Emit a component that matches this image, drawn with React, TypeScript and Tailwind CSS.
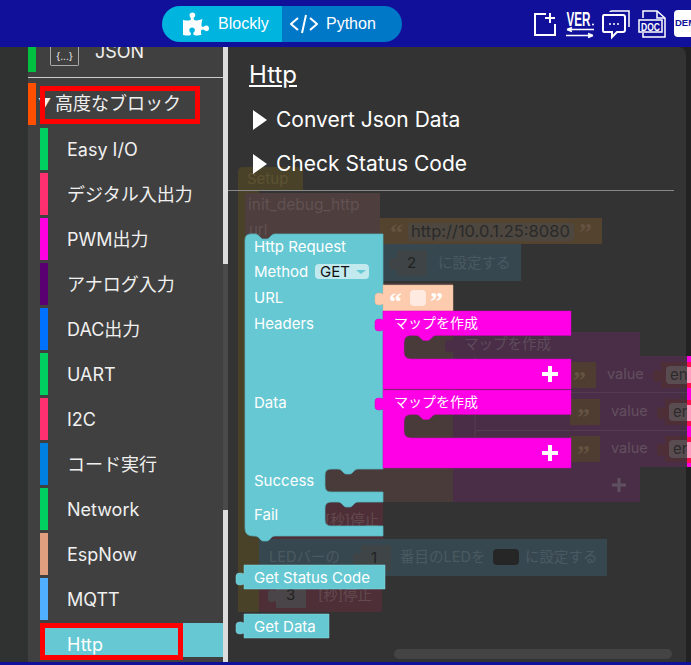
import React from 'react';
import { FaPuzzlePiece } from 'react-icons/fa';

const FONT = 'Inter, "Noto Sans CJK JP", sans-serif';
const QUOTE = '"Liberation Serif", serif';

interface Category {
    label: string;
    color: string;
}

const categories: Category[] = [
    { label: 'Easy I/O', color: 'bg-[#00d060]' },
    { label: 'デジタル入出力', color: 'bg-[#ff3070]' },
    { label: 'PWM出力', color: 'bg-[#ff00e0]' },
    { label: 'アナログ入力', color: 'bg-[#5a0070]' },
    { label: 'DAC出力', color: 'bg-[#0070ff]' },
    { label: 'UART', color: 'bg-[#00d060]' },
    { label: 'I2C', color: 'bg-[#ff3070]' },
    { label: 'コード実行', color: 'bg-[#0080e0]' },
    { label: 'Network', color: 'bg-[#00d060]' },
    { label: 'EspNow', color: 'bg-[#e0a080]' },
    { label: 'MQTT', color: 'bg-[#50b0ff]' },
];

// puzzle notch drawn left to right, and right to left
const NOTCH_R = 'c 2,0 3,1 4,2 l 2,2 c 1,1 2,1 3,1 h 2 c 1,0 2,0 3,-1 l 2,-2 c 1,-1 2,-2 4,-2';
const NOTCH_L = 'c -2,0 -3,1 -4,2 l -2,2 c -1,1 -2,1 -3,1 h -2 c -1,0 -2,0 -3,-1 l -2,-2 c -1,-1 -2,-2 -4,-2';
const TAB = 'q -2,1 -4,1 q -4,0 -4,-3 v -6 q 0,-3 4,-3 q 2,0 4,1';

const outputPath = (x: number, y: number, w: number, h: number) =>
    `M ${x},${y} H ${x + w} V ${y + h} H ${x} V ${y + 19} ${TAB} Z`;

const mainBlock = [
    'M 245,240 q 0,-6 6,-6 h 4',
    NOTCH_R,
    'H 383 V 469 H 358',
    NOTCH_L,
    'H 331 q -6,0 -6,6 V 486 q 0,6 6,6 H 383 V 502 H 358',
    NOTCH_L,
    'H 331 q -6,0 -6,6 V 520 q 0,6 6,6 H 383 V 536 H 275',
    NOTCH_L,
    'H 253 q -8,0 -8,-8 Z',
].join(' ');

const mapBlock = (y: number) =>
    [
        `M 383,${y} H 571 V ${y + 24.5} H 436`,
        NOTCH_L,
        `H 411 q -7,0 -7,7 V ${y + 41} q 0,7 7,7 H 571 V ${y + 78} H 383 V ${y + 19}`,
        TAB,
        'Z',
    ].join(' ');

const DimCanvas: React.FC = () => (
    <g fontFamily={FONT}>
        {/* setup block */}
        <path d="M 238,172 q 0,-5 5,-5 H 298 q 5,0 5,5 V 190 H 259 V 612 H 238 Z" fill="#4a4228" />
        <text x="247" y="184" fontSize="15" fill="#5c5232">Setup</text>
        <rect x="245" y="193" width="135" height="90" fill="#4e3e3e" />
        <rect x="245" y="283" width="208" height="219" fill="#4a3b3b" />
        <text x="248" y="210" fontSize="15.5" fill="#625252">init_debug_http</text>
        <text x="249" y="235" fontSize="15" fill="#625252">url</text>

        {/* url string */}
        <rect x="380" y="218" width="222" height="26" fill="#53432f" />
        <text x="390" y="241" fontFamily={QUOTE} fontSize="26" fontWeight="700" fill="#645340">“</text>
        <rect x="408" y="223" width="166" height="18" rx="4" fill="#4d473f" />
        <text x="411" y="236.5" fontSize="16.5" fill="#2a2a2a">http://10.0.1.25:8080</text>
        <text x="579" y="241" fontFamily={QUOTE} fontSize="26" fontWeight="700" fill="#645340">”</text>

        {/* port setter */}
        <rect x="245" y="244" width="276" height="37" fill="#37474f" />
        <path d={outputPath(397, 250, 30, 26)} fill="#3f4547" />
        <text x="407" y="268" fontSize="15" fill="#222">2</text>
        <text x="438" y="268" fontSize="14.5" fill="#4a5a62">に設定する</text>

        {/* nested map */}
        <rect x="453" y="332" width="187" height="24" fill="#4a2e47" />
        <rect x="453" y="356" width="234" height="111" fill="#4a2e47" />
        <rect x="453" y="467" width="187" height="35" fill="#4a2e47" />
        <path d={outputPath(453, 332, 100, 24)} fill="#4a2e47" />
        <text x="464" y="349" fontSize="14.5" fill="#5e4c5b">マップを作成</text>
        <path d="M 475,392.5 H 687 M 475,430.5 H 687" stroke="#553b52" strokeWidth="1" />
        <path d="M 475,356 V 467" stroke="#553b52" strokeWidth="1" />
        <rect x="570" y="362" width="26" height="26" fill="#4f3d32" />
        <rect x="570" y="399" width="30" height="26" fill="#4f3d32" />
        <rect x="570" y="436" width="30" height="26" fill="#4f3d32" />
        <text x="573" y="389" fontFamily={QUOTE} fontSize="26" fontWeight="700" fill="#645340">”</text>
        <text x="577" y="426" fontFamily={QUOTE} fontSize="26" fontWeight="700" fill="#645340">”</text>
        <text x="577" y="463" fontFamily={QUOTE} fontSize="26" fontWeight="700" fill="#645340">”</text>
        <text x="607" y="379" fontSize="14.5" fill="#63505f">value</text>
        <text x="611" y="416" fontSize="14.5" fill="#63505f">value</text>
        <text x="611" y="453" fontSize="14.5" fill="#63505f">value</text>
        {[362, 399, 436].map((y, i) => (
            <g key={y}>
                <path d={outputPath(i === 0 ? 661 : 665, y, 30, 26)} fill="#4e2f38" />
                <rect x={i === 0 ? 666 : 669} y={y + 4} width="30" height="18" rx="4" fill="#5a4d52" />
                <text x={i === 0 ? 670 : 673} y={y + 18} fontSize="15" fill="#2a2a2a">env</text>
            </g>
        ))}
        <path d="M 619,478 V 492 M 612,485 H 626" stroke="#5f5060" strokeWidth="3" />

        {/* strip of a block that runs off the canvas */}
        <rect x="687" y="356" width="4" height="111" fill="#ff00e0" />
        {[362, 400, 437].map((y) => (
            <g key={y}>
                <rect x="687" y={y} width="4" height="26" fill="#ff1050" />
                <rect x="687" y={y + 5} width="4" height="16" fill="#ff9ec0" />
            </g>
        ))}

        {/* stop + LED bar */}
        <rect x="259" y="502" width="124" height="37" fill="#4e2f37" />
        <text x="325" y="525" fontSize="14.5" fill="#634a50">[秒]停止</text>
        <rect x="259" y="539" width="348" height="37" fill="#37474f" />
        <text x="269" y="562" fontSize="14.5" fill="#4a5a62">LEDバーの</text>
        <path d={outputPath(361, 545, 30, 26)} fill="#3f4547" />
        <text x="371" y="563" fontSize="15" fill="#222">1</text>
        <text x="400" y="562" fontSize="14.5" fill="#4a5a62">番目のLEDを</text>
        <rect x="493" y="549" width="26" height="16" rx="4" fill="#262626" />
        <text x="525" y="562" fontSize="14.5" fill="#4a5a62">に設定する</text>
        <rect x="259" y="576" width="123" height="36" rx="2" fill="#4e2f37" />
        <path d={outputPath(276, 582, 30, 26)} fill="#4a4548" />
        <text x="286" y="600" fontSize="15" fill="#222">3</text>
        <text x="318" y="600" fontSize="14.5" fill="#634a50">[秒]停止</text>
    </g>
);

const ActiveBlocks: React.FC = () => (
    <g fontFamily={FONT} fill="#fff" fontSize="15">
        <path d={mainBlock} fill="#66c8d2" stroke="#58b4be" strokeWidth="0.75" />
        <text x="254" y="252">Http Request</text>
        <text x="254" y="277">Method</text>
        <rect x="315" y="264" width="54" height="15" rx="4" fill="#c2e9ed" />
        <text x="320" y="277" fill="#111">GET</text>
        <path d="M 356,270 H 366 L 361,274 Z" fill="#66c8d2" />
        <text x="254" y="303">URL</text>
        <text x="254" y="329">Headers</text>
        <text x="254" y="408">Data</text>
        <text x="254" y="486">Success</text>
        <text x="254" y="520">Fail</text>

        <path d={outputPath(383, 285, 70, 26)} fill="#fdcbae" stroke="#e8b698" strokeWidth="0.5" />
        <text x="389" y="310" fontFamily={QUOTE} fontSize="26" fontWeight="700">“</text>
        <rect x="410" y="290" width="16" height="16" rx="4" fill="#feeae0" />
        <text x="430" y="310" fontFamily={QUOTE} fontSize="26" fontWeight="700">”</text>

        <path d={mapBlock(311)} fill="#ff00e6" stroke="#d400c0" strokeWidth="0.5" />
        <text x="394" y="328" fontSize="14">マップを作成</text>
        <path d="M 550,366 V 382 M 542,374 H 558" stroke="#fff" strokeWidth="4" />
        <path d={mapBlock(390)} fill="#ff00e6" stroke="#d400c0" strokeWidth="0.5" />
        <text x="394" y="407" fontSize="14">マップを作成</text>
        <path d="M 550,445 V 461 M 542,453 H 558" stroke="#fff" strokeWidth="4" />

        <path d={outputPath(244, 565, 141, 24)} fill="#66c8d2" stroke="#8adbe3" strokeWidth="0.5" />
        <text x="254" y="583">Get Status Code</text>
        <path d={outputPath(244, 614, 85, 24)} fill="#66c8d2" stroke="#8adbe3" strokeWidth="0.5" />
        <text x="254" y="632">Get Data</text>
    </g>
);

const HeaderIcons: React.FC = () => (
    <div className="absolute right-0 top-0 flex h-[47px] items-start">
        <svg width="157" height="47" viewBox="534 0 157 47" fill="none" stroke="#fff">
            {/* new file */}
            <path d="M 546,14 H 535 V 35 H 555 V 24" strokeWidth="2" />
            <path d="M 550,13 V 23 M 545,18 H 555" strokeWidth="2" />
            {/* version */}
            <text x="566.5" y="25.5" fontFamily="Liberation Sans, sans-serif" fontWeight="700" fontSize="20" fill="#fff" stroke="none" textLength="24" lengthAdjust="spacingAndGlyphs">VER</text>
            <circle cx="593" cy="24.5" r="1" fill="#fff" stroke="none" />
            <path d="M 567,29.5 H 594 M 567,29.5 L 572,27.5 M 567,29.5 L 572,31.5" strokeWidth="1.5" />
            <path d="M 566,35.5 H 593 M 593,35.5 L 588,33.5 M 593,35.5 L 588,37.5" strokeWidth="1.5" />
            {/* chat */}
            <path d="M 604,15 H 623 Q 625,15 625,17 V 30 Q 625,32 623,32 H 617 L 612,37 V 32 H 604 Q 603,32 603,30 V 17 Q 603,15 604,15 Z" strokeWidth="2" />
            <path d="M 610,12 Q 610,11 612,11 H 629 V 27" strokeWidth="1.5" />
            <path d="M 609,24 h 2 M 613,24 h 2 M 617,24 h 2" strokeWidth="1.5" />
            {/* document */}
            <path d="M 643,18 V 11 H 657 L 665,18 V 37 H 643 V 33" strokeWidth="1.5" />
            <path d="M 657,11 V 18 H 665" strokeWidth="1.5" />
            <rect x="639" y="20" width="23" height="12" fill="#10109a" strokeWidth="1.5" />
            <text x="641" y="30.5" fontFamily="Liberation Sans, sans-serif" fontSize="11" fontWeight="700" fill="#fff" stroke="none" textLength="19" lengthAdjust="spacingAndGlyphs">DOC</text>
        </svg>
    </div>
);

const Header: React.FC = () => (
    <div className="relative h-[47px] shrink-0 bg-[#10109a] pt-[6px]">
        <div className="ml-[162px] flex h-[36px] w-[240px] overflow-hidden rounded-[18px] font-['Liberation_Sans',sans-serif] text-[16px] text-white">
            <div className="flex w-[120px] items-center bg-[#00b4e0] pl-[21px]">
                <FaPuzzlePiece size={26} />
                <span className="ml-[9px]">Blockly</span>
            </div>
            <div className="flex flex-1 items-center bg-[#0078c8] pl-[8px]">
                <svg width="28" height="24" viewBox="0 0 28 24" fill="none" stroke="#fff" strokeWidth="2">
                    <path d="M 8,6 L 1,12 L 8,18 M 20,6 L 27,12 L 20,18 M 16,3 L 12,21" />
                </svg>
                <span className="ml-[8px]">Python</span>
            </div>
        </div>
        <HeaderIcons />
        <div className="absolute right-0 top-[10px] flex h-[27px] w-[17px] items-center overflow-hidden rounded-l-[4px] bg-white pl-[1px] font-['Liberation_Sans',sans-serif] text-[9.5px] font-bold text-[#10109a]">
            DEM
        </div>
    </div>
);

const Sidebar: React.FC = () => (
    <div className="flex w-[200px] shrink-0 bg-[#4a4a4a]">
        <div className="flex w-[195px] flex-col overflow-hidden bg-[#404040] text-[18px] text-[#f0f0f0]">
            <div className="flex h-[25px] shrink-0 items-start">
                <div className="h-full w-[8px] bg-[#00c040]" />
                <div className="ml-[14px] flex h-[19px] w-[29px] shrink-0 items-center justify-center rounded-b-[2px] border border-t-0 border-[#aaa] text-[10px] leading-none">
                    {'{...}'}
                </div>
                <span className="ml-[16px] -mt-[4px] text-[18px] leading-[18px]">JSON</span>
            </div>
            <div className="mt-[5px] h-px shrink-0 bg-[#ccc]" />
            <div className="mt-[5px] flex h-[42px] shrink-0 items-center">
                <div className="h-full w-[8px] bg-[#ff5000]" />
                <span className="ml-[2px] w-[17px] text-[13px]">▼</span>
                <span className="text-[18px] leading-none">高度なブロック</span>
            </div>
            <div className="flex flex-col gap-[3px] pt-[3px]">
                {categories.map((c) => (
                    <div key={c.label} className="flex h-[42px] shrink-0 items-center pl-[12px]">
                        <div className={`h-full w-[8px] ${c.color}`} />
                        <span className="ml-[19px]">{c.label}</span>
                    </div>
                ))}
                <div className="ml-[12px] flex h-[34px] shrink-0 items-center bg-[#66c8d2] pl-[27px] pt-[8px] text-white">
                    Http
                </div>
            </div>
        </div>
        <div className="relative w-[5px]">
            <div className="h-[217px] bg-[#dcdcdc]" />
            <div className="absolute bottom-0 left-0 h-[152px] w-full bg-[#dcdcdc]" />
        </div>
    </div>
);

const Flyout: React.FC = () => (
    <div className="relative flex-1 overflow-hidden bg-[#222]">
        <div className="h-full w-[458px] rounded-tr-[8px] bg-[#333]" />
        <svg className="absolute left-0 top-0" width="463" height="615" viewBox="228 47 463 615">
            <DimCanvas />
            <ActiveBlocks />
        </svg>
        <div className="absolute left-0 top-0 w-[458px] text-white">
            <div className="pl-[21px] pt-[12px] text-[24px] leading-[32px] underline">Http</div>
            <div className="flex flex-col">
                {['Convert Json Data', 'Check Status Code'].map((t, i) => (
                    <div key={t} className={`flex h-[28px] items-center pl-[25px] text-[21px] ${i === 0 ? 'mt-[15px]' : 'mt-[16px]'}`}>
                        <svg width="14" height="20" viewBox="0 0 14 20" fill="#fff">
                            <path d="M 0,0 L 14,10 L 0,20 Z" />
                        </svg>
                        <span className="ml-[9px]">{t}</span>
                    </div>
                ))}
            </div>
            <div className="mt-[12px] h-px w-[446px] bg-[#888]" />
        </div>
        <div className="absolute bottom-[3px] left-[166px] h-[10px] w-[278px] rounded-full bg-[#444]" />
    </div>
);

export default function App() {
    return (
        <div className="flex h-[665px] w-[691px] flex-col overflow-hidden bg-[#333]" style={{ fontFamily: FONT }}>
            <Header />
            <div className="relative flex min-h-0 flex-1">
                <div className="w-[28px] shrink-0 bg-[#303231]" />
                <Sidebar />
                <Flyout />
                {/* red highlights someone drew over the screenshot */}
                <div className="absolute left-[40px] top-[39px] h-[38px] w-[160px] border-[5px] border-[#f00]" />
                <div className="absolute left-[40px] top-[576px] h-[37px] w-[143px] border-[5px] border-[#f00]" />
            </div>
            <div className="h-[3px] shrink-0 bg-[#10109a]" />
        </div>
    );
}
